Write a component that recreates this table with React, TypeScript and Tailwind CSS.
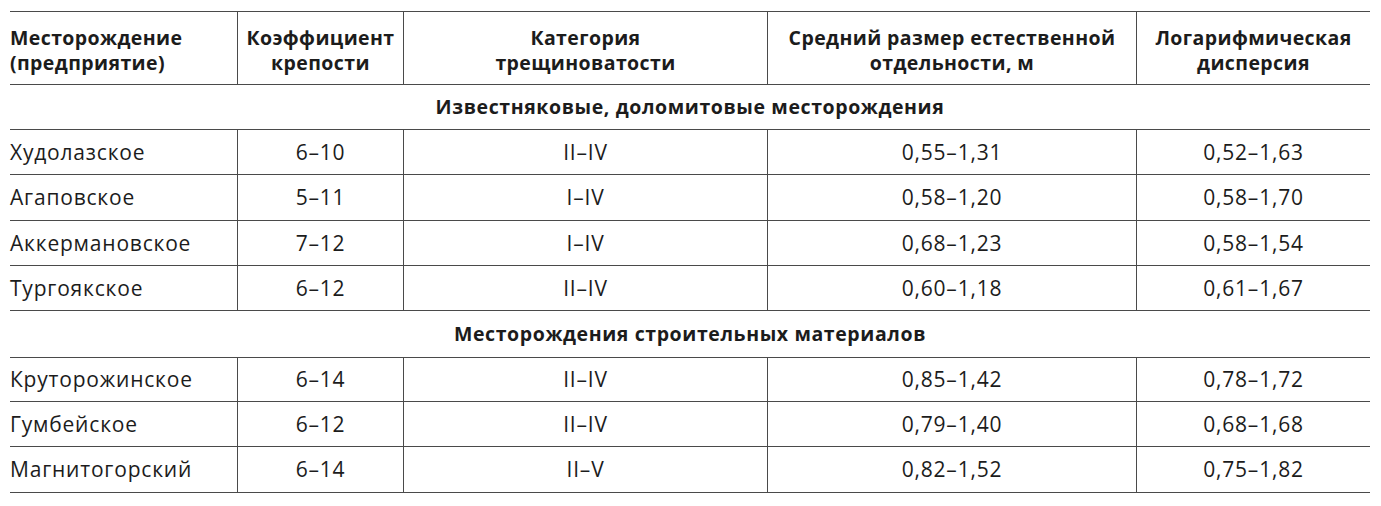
import React from "react";

const cols = "grid grid-cols-[227px_166px_364px_369px_234px]";

type Row = { kind: "data"; h: string; cells: string[] } | { kind: "section"; h: string; title: string };

const rows: Row[] = [
  { kind: "section", h: "h-[45px]", title: "Известняковые, доломитовые месторождения" },
  { kind: "data", h: "h-[45px]", cells: ["Худолазское", "6–10", "II–IV", "0,55–1,31", "0,52–1,63"] },
  { kind: "data", h: "h-[46px]", cells: ["Агаповское", "5–11", "I–IV", "0,58–1,20", "0,58–1,70"] },
  { kind: "data", h: "h-[45px]", cells: ["Аккермановское", "7–12", "I–IV", "0,68–1,23", "0,58–1,54"] },
  { kind: "data", h: "h-[45px]", cells: ["Тургоякское", "6–12", "II–IV", "0,60–1,18", "0,61–1,67"] },
  { kind: "section", h: "h-[47px]", title: "Месторождения строительных материалов" },
  { kind: "data", h: "h-[44px]", cells: ["Круторожинское", "6–14", "II–IV", "0,85–1,42", "0,78–1,72"] },
  { kind: "data", h: "h-[45px]", cells: ["Гумбейское", "6–12", "II–IV", "0,79–1,40", "0,68–1,68"] },
  { kind: "data", h: "h-[46px]", cells: ["Магнитогорский", "6–14", "II–V", "0,82–1,52", "0,75–1,82"] },
];

const headers = [
  ["Месторождение", "(предприятие)"],
  ["Коэффициент", "крепости"],
  ["Категория", "трещиноватости"],
  ["Средний размер естественной", "отдельности, м"],
  ["Логарифмическая", "дисперсия"],
];

export default function App() {
  return (
    <div className="w-[1381px] h-[506px] bg-white text-[#1c1c1c] font-['Open_Sans','Lato',sans-serif] pt-[11px] pl-[10px]">
      <div className="w-[1360px] border-t border-[#4a4a4a]">
        <div className={`${cols} h-[73px] border-b border-[#4a4a4a] text-[19.5px] leading-[25px] font-bold tracking-[0.4px]`}>
          {headers.map((h, i) => (
            <div
              key={i}
              className={
                i === 0
                  ? "flex flex-col justify-center pt-[3px] text-left whitespace-nowrap"
                  : "flex flex-col justify-center pt-[3px] text-center border-l border-[#4a4a4a] whitespace-nowrap"
              }
            >
              <p>
                {h[0]}
                <br />
                {h[1]}
              </p>
            </div>
          ))}
        </div>
        {rows.map((r, idx) =>
          r.kind === "section" ? (
            <div
              key={idx}
              className={`${r.h} flex items-center justify-center border-b border-[#4a4a4a] text-[19.5px] font-bold tracking-[0.6px]`}
            >
              {r.title}
            </div>
          ) : (
            <div key={idx} className={`${cols} ${r.h} border-b border-[#4a4a4a] text-[21px] tracking-[0.8px]`}>
              {r.cells.map((c, i) => (
                <div
                  key={i}
                  className={
                    i === 0
                      ? "flex items-center justify-start pt-[1px]"
                      : "flex items-center justify-center pt-[1px] border-l border-[#4a4a4a]"
                  }
                >
                  {c}
                </div>
              ))}
            </div>
          )
        )}
      </div>
    </div>
  );
}
